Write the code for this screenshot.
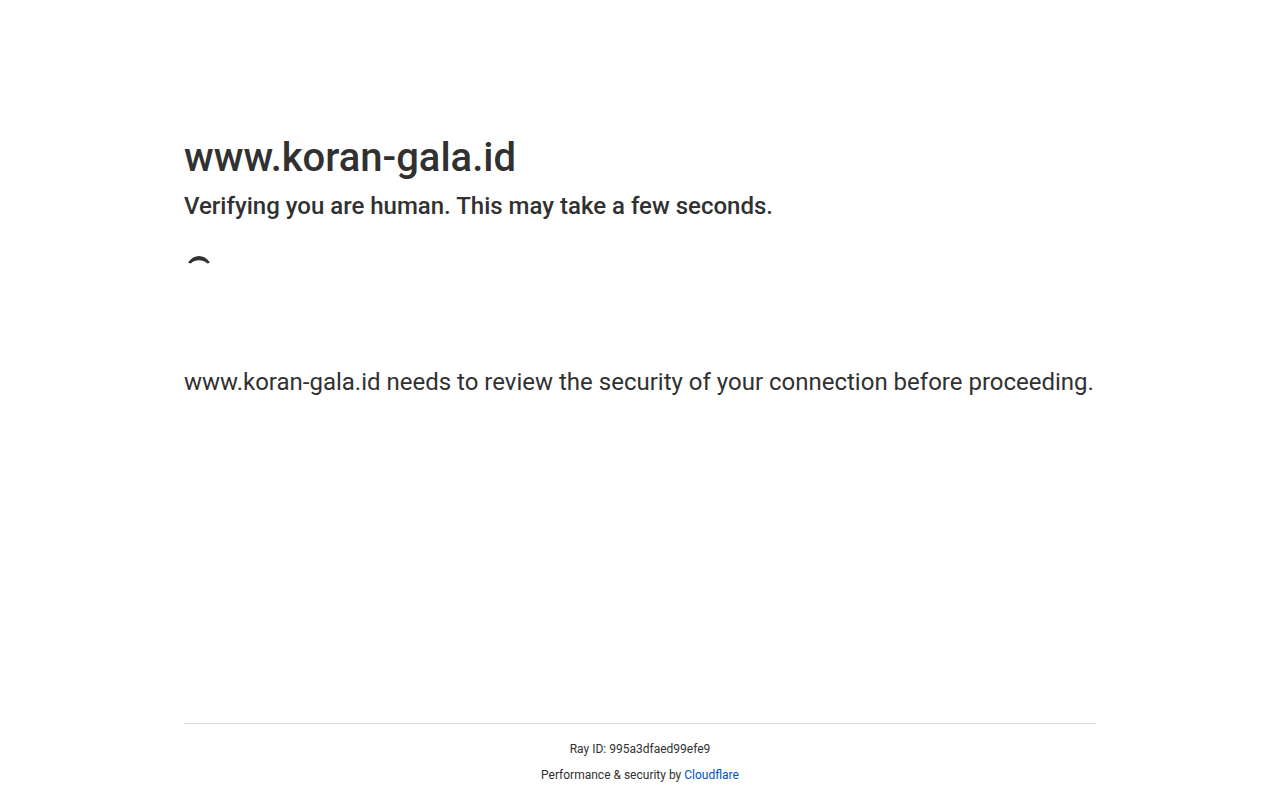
<script>
</script>

<div class="page">
  <div class="main">
    <h1>www.koran-gala.id</h1>
    <h2>Verifying you are human. This may take a few seconds.</h2>
    <div class="spin-box">
      <svg width="30" height="30" viewBox="0 0 30 30" class="spinner">
        <path d="M4 8.4 C7 4.2 11 2 15 2 C19 2 23 4.2 26 8.4 L23.4 9.6 C21 7.2 18 6.3 15 6.3 C12 6.3 9 7.2 6.6 9.6 Z" fill="#313131"/>
      </svg>
    </div>
    <p class="note">www.koran-gala.id needs to review the security of your connection before proceeding.</p>
  </div>
  <footer>
    <div class="ray">Ray ID: <code>995a3dfaed99efe9</code></div>
    <div class="perf">Performance &amp; security by <a href="#top">Cloudflare</a></div>
  </footer>
</div>

<style>
  :global(body) { margin: 0; background: #fff; color: #313131; font-family: Roboto, "Liberation Sans", sans-serif; }
  .page { width: 912px; margin: 0 auto; height: 800px; display: flex; flex-direction: column; overflow: hidden; }
  .main { flex: 1; padding-top: 133px; }
  h1 { margin: 0; font-size: 40px; font-weight: 500; line-height: 50px; }
  h2 { margin: 7px 0 0; font-size: 24px; font-weight: 500; line-height: 32px; }
  .spin-box { margin-top: 32px; height: 30px; }
  .spinner { display: block; }
  .note { margin: 82px 0 0; font-size: 24px; line-height: 32px; white-space: nowrap; }
  footer { border-top: 1px solid #d9d9d9; padding-top: 16px; text-align: center; font-size: 12px; line-height: 18px; height: 60px; }
  .ray { margin-bottom: 8px; }
  code { font-family: inherit; }
  a { color: #0051c3; text-decoration: none; }
</style>
